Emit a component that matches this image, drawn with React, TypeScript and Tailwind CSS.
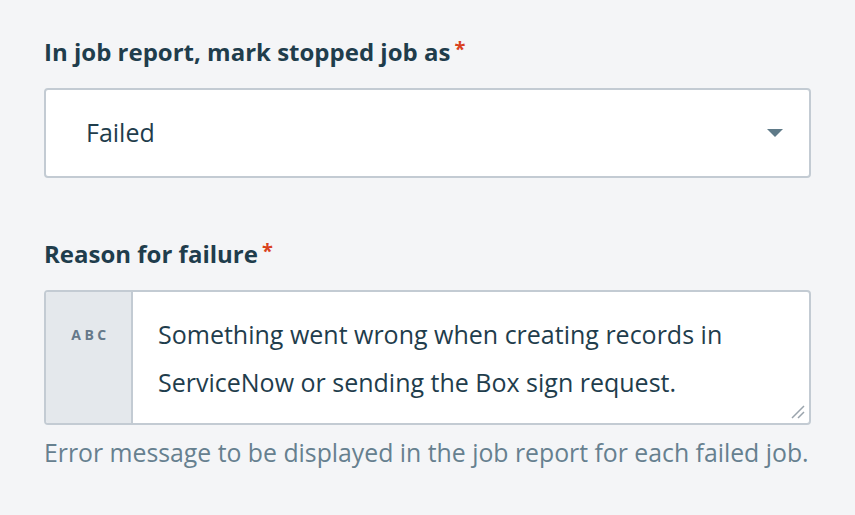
import React from 'react';

const font = { fontFamily: '"Open Sans", "Noto Sans", sans-serif' };

export default function App() {
  return (
    <div className="w-[855px] h-[515px] bg-[#f4f5f7] px-[44px] pt-[36px] text-[#1f3d4c]" style={font}>
      {/* Select field */}
      <label className="flex items-start text-[24px] font-bold leading-[32px]">
        In job report, mark stopped job as
        <span className="ml-[4px] text-[#d9411e] text-[20px] leading-[26px]">*</span>
      </label>
      <div className="mt-[20px] h-[90px] flex items-center justify-between rounded-[4px] border-2 border-[#c3cbd3] bg-white pl-[40px] pr-[26px]">
        <span className="text-[25px]">Failed</span>
        <svg width="16" height="10" viewBox="0 0 16 10">
          <path d="M0 1 L16 1 L8 9 Z" fill="#5f7a88" />
        </svg>
      </div>

      {/* Textarea field */}
      <label className="mt-[60px] flex items-start text-[24px] font-bold leading-[32px]">
        Reason for failure
        <span className="ml-[4px] text-[#d9411e] text-[20px] leading-[26px]">*</span>
      </label>
      <div className="mt-[20px] h-[135px] flex rounded-[4px] border-2 border-[#c3cbd3] bg-white overflow-hidden">
        <div className="w-[87px] shrink-0 bg-[#e4e8ec] border-r-2 border-[#c3cbd3] flex justify-center pt-[36px]">
          <span className="text-[14px] font-bold tracking-[3.5px] text-[#66798a] leading-[14px] pl-[4px]">ABC</span>
        </div>
        <div className="relative flex-1 pl-[25px] pt-[18px] pr-[20px] text-[25px] leading-[48px]">
          Something went wrong when creating records in ServiceNow or sending the Box sign request.
          <svg className="absolute right-[4px] bottom-[4px]" width="16" height="16" viewBox="0 0 16 16">
            <path d="M15 3 L3 15 M15 9 L9 15" stroke="#9aa4ac" strokeWidth="1.5" />
          </svg>
        </div>
      </div>
      <p className="mt-[12px] text-[24.8px] leading-[30px] text-[#66808f] whitespace-nowrap">
        Error message to be displayed in the job report for each failed job.
      </p>
    </div>
  );
}
